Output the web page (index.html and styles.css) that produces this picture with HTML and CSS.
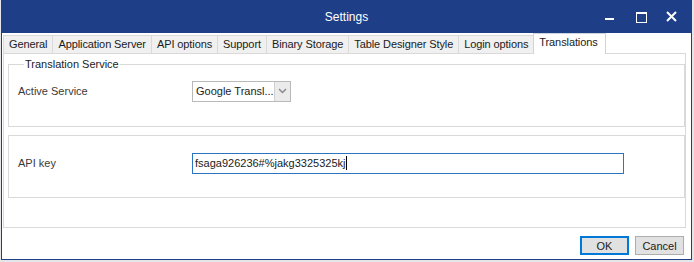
FILE: index.html
```html
<!DOCTYPE html>
<html>
<head>
  <title>Settings</title>
  <link rel="stylesheet" href="styles.css">
</head>
<body>

  <div class="window">
    <div class="titlebar">
      <span></span>
      <span class="title">Settings</span>
      <div class="controls">
        <svg width="26" height="20" viewBox="0 0 26 20"><rect x="8" y="10" width="9" height="2" fill="#fff"/></svg>
        <svg width="26" height="20" viewBox="0 0 26 20"><rect x="8.5" y="4.5" width="10" height="10" fill="none" stroke="#fff"/><rect x="8" y="4" width="11" height="2" fill="#fff"/></svg>
        <svg width="26" height="20" viewBox="0 0 26 20"><path d="M8 4 L17 13 M17 4 L8 13" stroke="#fff" stroke-width="2"/></svg>
      </div>
    </div>

    <div class="content">
      <div class="tabs">
        <div class="tab">General</div>
        <div class="tab">Application Server</div>
        <div class="tab">API options</div>
        <div class="tab">Support</div>
        <div class="tab">Binary Storage</div>
        <div class="tab">Table Designer Style</div>
        <div class="tab">Login options</div>
        <div class="tab active">Translations</div>
      </div>

      <div class="panel">
        <fieldset class="group">
          <legend>Translation Service</legend>
          <div class="row">
            <label>Active Service</label>
            <div class="select">
              <span class="select-text">Google Transl...</span>
              <span class="select-btn">
                <svg width="9" height="6" viewBox="0 0 9 6"><path d="M1 1 L4.5 4.5 L8 1" fill="none" stroke="#8a8a8a" stroke-width="1.5"/></svg>
              </span>
            </div>
          </div>
        </fieldset>

        <fieldset class="group plain">
          <div class="row">
            <label>API key</label>
            <div class="input">fsaga926236#%jakg3325325kj<span class="caret"></span></div>
          </div>
        </fieldset>
      </div>

      <div class="footer">
        <button class="btn default">OK</button>
        <button class="btn">Cancel</button>
      </div>
    </div>
  </div>

</body>
</html>
```

FILE: styles.css
```css
body {
  margin: 0;
  background: #e4e6ea;
  font-family: "Liberation Sans", Arial, sans-serif;
  font-size: 11px;
  color: #1b1b1b;
}
.window {
  margin-left: 1px;
  width: 691px;
  height: 260px;
  box-sizing: border-box;
  border: 1px solid #1e3f88;
  border-top: none;
  background: #fff;
  display: flex;
  flex-direction: column;
}
.titlebar {
  height: 33px;
  background: #1e3f88;
  color: #fff;
  display: grid;
  grid-template-columns: 1fr auto 1fr;
  align-items: center;
  font-size: 12px;
}
.title { padding-top: 1px; }
.controls {
  display: flex;
  justify-content: flex-end;
  gap: 5px;
  padding-right: 6px;
  padding-top: 2px;
}
.content {
  flex: 1;
  display: flex;
  flex-direction: column;
}
.tabs {
  display: flex;
  align-items: flex-end;
  height: 20px;
  margin-left: 1px;
}
.tab {
  height: 18px;
  box-sizing: border-box;
  line-height: 17px;
  padding: 0 5px;
  letter-spacing: -0.1px;
  background: #f0f0f0;
  border: 1px solid #d9d9d9;
  border-bottom: none;
  margin-right: -1px;
  white-space: nowrap;
}
.tab.active {
  height: 21px;
  line-height: 17px;
  background: #fff;
  margin-bottom: -1px;
  padding: 0 7px 0 5px;
  position: relative;
  z-index: 1;
  border-color: #cfd5de;
}
.panel {
  margin-left: 1px;
  width: 683px;
  height: 175px;
  box-sizing: border-box;
  border: 1px solid #d9d9d9;
  padding: 3px 0 0 4px;
  display: flex;
  flex-direction: column;
  gap: 8px;
}
.group {
  margin: 0;
  padding: 10px 0 25px 9px;
  width: 677px;
  box-sizing: border-box;
  border: 1px solid #d9d9d9;
  min-width: 0;
}
.group.plain { padding: 17px 0 24px 9px; }
.group legend {
  margin-left: 6px;
  padding: 0 1px;
  line-height: 14px;
  color: #1b1b1b;
}
.row {
  display: flex;
  align-items: center;
  height: 20px;
}
.row label {
  width: 174px;
  color: #3a3a3a;
}
.select {
  width: 99px;
  height: 21px;
  box-sizing: border-box;
  border: 1px solid #b9b9b9;
  display: flex;
}
.select-text {
  flex: 1;
  padding-left: 3px;
  line-height: 19px;
  white-space: nowrap;
  overflow: hidden;
}
.select-btn {
  width: 15px;
  background: #ebebeb;
  border-left: 1px solid #d0d0d0;
  display: flex;
  align-items: center;
  justify-content: center;
}
.input {
  width: 432px;
  height: 21px;
  box-sizing: border-box;
  border: 1px solid #2a74c2;
  padding-left: 2px;
  line-height: 19px;
  display: flex;
  align-items: center;
}
.caret {
  display: inline-block;
  width: 1px;
  height: 14px;
  background: #000;
  margin-left: 1px;
}
.footer {
  display: flex;
  justify-content: flex-end;
  gap: 6px;
  padding: 8px 7px 0 0;
}
.btn {
  width: 49px;
  height: 19px;
  box-sizing: border-box;
  background: #e1e1e1;
  border: 1px solid #adadad;
  font-family: inherit;
  font-size: 11px;
  color: #1b1b1b;
  padding: 0;
}
.btn.default { border: 2px solid #0078d7; }
```
